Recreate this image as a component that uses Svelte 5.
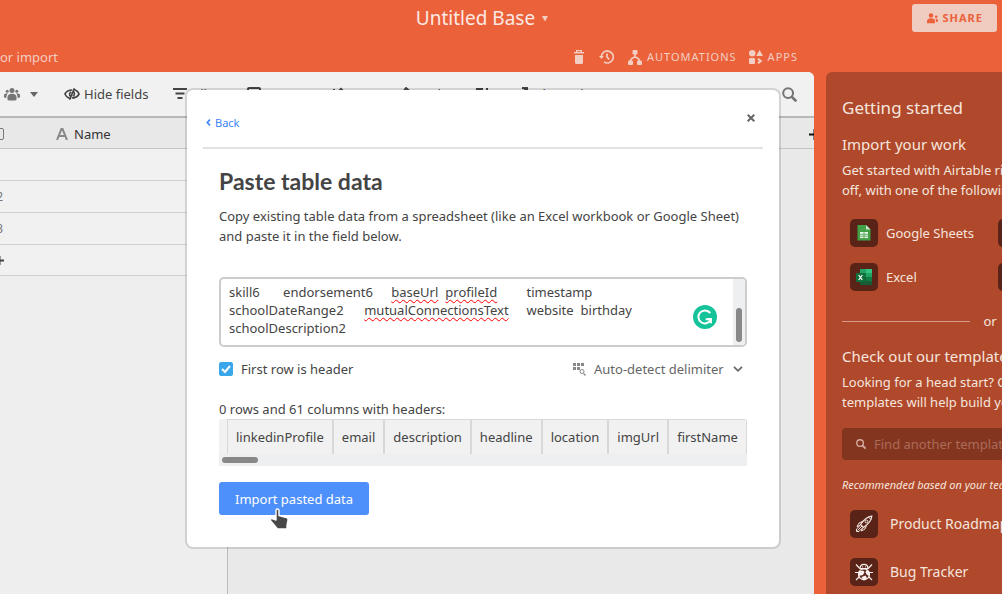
<script>
  const rows = ['1', '2', '3'];
  const tools = [
    { name: 'Filter', icon: 'filter', width: 74 },
    { name: 'Group', icon: 'group', width: 84 },
    { name: 'Sort', icon: 'sort', width: 70 },
    { name: 'Color', icon: 'color', width: 74 },
    { name: '', icon: 'height', width: 40 },
    { name: 'Share view', icon: 'share', width: 100 }
  ];
  const columns = ['linkedinProfile', 'email', 'description', 'headline', 'location', 'imgUrl', 'firstName'];
  const pastedLines = [
    [['skill6\tendorsement6\t'], ['baseUrl', true], ['\t'], ['profileId', true], ['\t\ttimestamp\n']],
    [['schoolDateRange2\t'], ['mutualConnectionsText', true], ['\twebsite\tbirthday\n']],
    [['schoolDescription2']]
  ];
  const segments = pastedLines.flat();
  let pasted = $state(segments.map(([text]) => text).join(''));
  let firstRowIsHeader = $state(true);
</script>

{#snippet magnifier(size)}
  <svg width={size} height={size} viewBox="0 0 14 14" fill="none" stroke="currentColor" aria-hidden="true">
    <circle cx="5.7" cy="5.7" r="4.6" stroke-width="1.9" />
    <path d="M9.2 9.2 12.6 12.6" stroke-width="2.5" stroke-linecap="round" />
  </svg>
{/snippet}

<div class="page">
  <header class="top">
    <div class="title-row">
      <button class="base-name">Untitled Base
        <svg width="6" height="5" viewBox="0 0 6 5" aria-hidden="true"><path d="M0 0h6L3.600 4.400a.7.7 0 0 1-1.200 0z" fill="#f3cec2" /></svg>
      </button>
      <button class="share">
        <svg width="11" height="11" viewBox="0 0 11 11" fill="currentColor" aria-hidden="true">
          <circle cx="4" cy="2.500" r="2.300" />
          <path d="M0 10.300V8.200C0 6.400 1.500 5.300 4 5.300s4 1.100 4 2.900v2.100z" />
          <circle cx="9.200" cy="3.800" r="1.300" /><path d="M8.200 5.800c2-.3 2.800.5 2.800 1.700v1.200H9c0-1.200-.2-2.100-.8-2.900z" />
        </svg>
        SHARE
      </button>
    </div>
    <nav class="sub-row">
      <a href="#import">or import</a>
      <div class="actions">
        <button aria-label="Trash" class="trash">
          <svg width="10" height="14" viewBox="0 0 10 14" aria-hidden="true">
            <path d="M1 5h8v7.500a1.500 1.500 0 0 1-1.500 1.500h-5A1.500 1.500 0 0 1 1 12.500zM0 2h10v1.600H0z" fill="currentColor" /><path d="M2.600 2V.6h4.800V2" fill="none" stroke="currentColor" stroke-width="1.200" />
          </svg>
        </button>
        <button aria-label="History" class="history">
          <svg width="15" height="14" viewBox="0 0 15 14" fill="none" stroke="currentColor" stroke-width="1.700" aria-hidden="true">
            <path d="M2.300 7a6 6 0 1 1 2.600 4.900M8 3.500V7l2.200 2.400" /><path d="M0 6h4.800L2.400 9z" fill="currentColor" stroke="none" />
          </svg>
        </button>
        <button class="automations">
          <svg width="14" height="15" viewBox="0 0 14 15" fill="currentColor" aria-hidden="true">
            <rect x="4.500" width="5" height="4.500" rx="1" /><rect y="10.500" width="5" height="4.500" rx="1" /><rect x="9" y="10.500" width="5" height="4.500" rx="1" />
            <path d="M7 4v3.500M2.500 11c0-2.200 1-3.100 4.500-4.100 3.500 1 4.500 1.900 4.500 4.100" fill="none" stroke="currentColor" stroke-width="1.600" />
          </svg>
          AUTOMATIONS
        </button>
        <button class="apps">
          <svg width="14" height="14" viewBox="0 0 14 14" fill="currentColor" aria-hidden="true">
            <circle cx="3.200" cy="3.200" r="3.200" /><path d="M10.600 0 14 6H7.200z" /><rect y="8" width="6" height="6" rx="1" />
            <path d="M9 8.700 11.800 11 9 13.300" fill="none" stroke="currentColor" stroke-width="2" />
          </svg>
          APPS
        </button>
      </div>
    </nav>
  </header>

  <div class="main">
    <main class="workspace">
      <div class="toolbar">
        <button class="views" aria-label="Collaborative view">
          <svg width="16" height="13" viewBox="0 0 16 13" fill="#757575" aria-hidden="true">
            <circle cx="8" cy="2.600" r="2.500" /><circle cx="3.200" cy="3.200" r="1.500" /><circle cx="12.800" cy="3.200" r="1.500" />
            <path d="M3.500 12V9.200C3.500 7 5 5.700 8 5.700s4.500 1.300 4.500 3.500V12c-1.300.8-7.700.8-9 0zM0 9.600V7.200c0-1.500 1.500-2.100 4-1.700C2.700 6.500 2.300 8 2.400 10c-1 0-1.800 0-2.400-.4zM16 9.600V7.200c0-1.500-1.500-2.100-4-1.700 1.300 1 1.700 2.500 1.600 4.500 1 0 1.800 0 2.400-.4z" />
          </svg>
          <svg width="8" height="5" viewBox="0 0 8 5" aria-hidden="true"><path d="M0 0h8L4 5z" fill="#666" /></svg>
        </button>
        <button class="hide">
          <svg width="16" height="12" viewBox="0 0 16 12" fill="none" stroke="currentColor" stroke-width="1.600" aria-hidden="true">
            <path d="M5.500 10.500C3.400 9.600 1.700 8 .9 6c1.300-2.400 3.600-4 7.300-4M6.300 8.300C4.900 6.500 5.800 4.300 7.300 3.900M10.500 1.500C12.600 2.400 14.300 4 15.100 6c-1.300 2.400-3.600 4-7.300 4M9.700 3.700c1.400 1.800.5 4-1 4.400M10.400.3 5.600 11.700" />
          </svg>
          Hide fields
        </button>
        <div class="tools">
          {#each tools as tool}
            <button style:width="{tool.width}px" aria-label={tool.name || 'Row height'}>
              <svg width="14" height="14" viewBox="0 0 14 14" fill="none" stroke="currentColor" stroke-width="2" aria-hidden="true">
                {#if tool.icon === 'filter'}<path d="M0 2h14M2.500 6.500h9M4.500 11h5" />
                {:else if tool.icon === 'group'}<rect x="1" y="1" width="12" height="11" rx="1" />
                {:else if tool.icon === 'sort'}<path d="M3 2v10M10 2v10M1 10l2 2 2-2M8 4l2-2 2 2" />
                {:else if tool.icon === 'color'}<path d="m5 1 7 6-5 5-6-5z" />
                {:else if tool.icon === 'height'}<path d="M1 2h7M1 7h7M1 12h7M12 1v12" />
                {:else}<path d="M7 1h5v5M12 1 6 7M1 4v8h9V9" />{/if}
              </svg>
              {tool.name}
            </button>
          {/each}
        </div>
        <button class="find" aria-label="Find">{@render magnifier(15)}</button>
      </div>

      <div class="sheet">
        <div class="sheet-head">
          <input type="checkbox" aria-label="Select all rows" />
          <svg class="field-type" width="12" height="12" viewBox="0 0 12 12" fill="none" stroke="#888" stroke-width="2" aria-hidden="true"><path d="M1 12 5.500.800h1L11 12M2.700 8h6.600" /></svg>
          <span>Name</span>
          <button class="add-field" aria-label="Add field">
            <svg width="11" height="11" viewBox="0 0 11 11" aria-hidden="true"><path d="M5.500 0v11M0 5.500h11" stroke="#111" stroke-width="2" /></svg>
          </button>
        </div>
        <div class="records">
          {#each rows as row, i}
            <div class="record" class:active={i === 0}><span>{row}</span></div>
          {/each}
          <button class="record add" aria-label="Add record">
            <svg width="9" height="9" viewBox="0 0 9 9" aria-hidden="true"><path d="M4.500 0v9M0 4.500h9" stroke="#444" stroke-width="2" /></svg>
          </button>
        </div>
      </div>
    </main>

    <aside class="panel">
      <h2>Getting started</h2>
      <h3>Import your work</h3>
      <p>Get started with Airtable right<br />off, with one of the following:</p>
      <div class="sources">
        <a href="#sheets">
          <span class="tile"><svg width="16" height="18" viewBox="0 0 16 18" aria-hidden="true">
            <path d="M2 1h8l4.500 4.500v11H1.500V1z" fill="#43a047" /><path d="m10 1 4.500 4.500H10z" fill="#c8e6c9" />
            <path d="M4 8h8v6H4z" fill="#e8f5e9" /><path d="M4 10.300h8M8 8v6M4 12.200h8" stroke="#43a047" stroke-width=".8" />
          </svg></span>Google Sheets
        </a>
        <span class="tile"></span>
        <a href="#excel">
          <span class="tile"><svg width="16" height="16" viewBox="0 0 16 16" aria-hidden="true">
            <path d="M4 0h6v4H4z" fill="#21a366" /><path d="M10 0h6v4h-6z" fill="#33c481" /><path d="M4 4h6v4H4z" fill="#107c41" /><path d="M10 4h6v4h-6z" fill="#21a366" />
            <path d="M4 8h6v4H4z" fill="#185c37" /><path d="M10 8h6v4h-6z" fill="#107c41" /><path d="M4 12h12v4H4z" fill="#185c37" />
            <rect y="4" width="9" height="9" rx="1" fill="#10703b" /><path d="m2.700 6 3.600 5M6.300 6l-3.600 5" stroke="#fff" stroke-width="1.200" />
          </svg></span>Excel
        </a>
        <span class="tile"></span>
      </div>
      <div class="divider"><span>or</span></div>
      <h3>Check out our templates</h3>
      <p>Looking for a head start? Our<br />templates will help build your</p>
      <label class="search">
        {@render magnifier(10)}
        <input type="search" placeholder="Find another template" aria-label="Find another template" />
      </label>
      <em>Recommended based on your team</em>
      <a class="template" href="#roadmap">
        <span class="tile"><svg width="18" height="18" viewBox="0 0 18 18" fill="none" stroke="#f4e6e1" aria-hidden="true">
          <path d="M16.800 1.200c-4.300.4-7.300 2.600-11.300 8.300l3 3c5.700-4 7.900-7 8.300-11.300z" stroke-width="1.200" /><path d="M13.300 1.900l2.800 2.800" /><circle cx="11.500" cy="6.500" r="1.400" />
          <path d="M7.500 6.500 4 8 2 11.700l3.500-1.500M11.500 10.500 10 14l-3.700 2 1.500-3.500M4.700 11 1.500 14v2.500H4l3-3.200M2.500 15.500 7 11" />
        </svg></span>Product Roadmap
      </a>
      <a class="template" href="#bugs">
        <span class="tile"><svg width="18" height="18" viewBox="0 0 18 18" fill="none" stroke="#f8eeeb" stroke-width="1.200" aria-hidden="true">
          <path d="M1 1.500 4.800 5.500M17 1.500 13.200 5.500M0 9.500h4M14 9.500h4M1 17l3.500-3.500M17 17l-3.500-3.500" /><path d="M5 5.500C5 2.800 6.500 1.300 9 1.300s4 1.500 4 4.200z" />
          <circle cx="9" cy="11.300" r="5.500" />
          <path d="M3.500 8.500 8 7.500l1.500 1.500L8 12l-4.500 1zM11 7.300l3 .7.700 5-2.700-1-1.500-2.500zM6.500 14l4-1.500 1.500 2.500-2 2H8z" fill="#f8eeeb" stroke="none" /><path d="M7.500 3.800h.1M10.500 3.800h.1" stroke-linecap="round" />
        </svg></span>Bug Tracker
      </a>
    </aside>
  </div>

  <div class="overlay">
    <section class="dialog" role="dialog" aria-labelledby="dialog-title">
      <div class="dialog-head">
        <button class="back"><svg width="5" height="7" viewBox="0 0 5 7" aria-hidden="true"><path d="M4 .6 1.300 3.500 4 6.400" fill="none" stroke="currentColor" stroke-width="1.600" /></svg>Back</button>
        <button class="close" aria-label="Close"><svg width="8" height="8" viewBox="0 0 8 8" aria-hidden="true"><path d="M.7.700 7.300 7.300M7.300.700.700 7.300" stroke="currentColor" stroke-width="2" /></svg></button>
      </div>
      <div class="dialog-body">
        <h1 id="dialog-title">Paste table data</h1>
        <p id="paste-help">Copy existing table data from a spreadsheet (like an Excel workbook or Google Sheet) and paste it in the field below.</p>
        <div class="paste">
          <div class="marks" aria-hidden="true">{#each segments as [text, misspelt]}<span class:misspelt>{text}</span>{/each}</div>
          <textarea bind:value={pasted} aria-labelledby="dialog-title" aria-describedby="paste-help" spellcheck="false"></textarea>
          <div class="v-track"><span></span></div>
          <svg class="checker" width="24" height="24" viewBox="0 0 24 24" aria-hidden="true">
            <circle cx="12" cy="12" r="12" fill="#15c39a" />
            <path d="M16.700 7.500A6.500 6.500 0 1 0 17.600 15" fill="none" stroke="#fff" stroke-width="2" stroke-linecap="round" />
            <path d="M12.700 14.300h5.200v4" fill="none" stroke="#fff" stroke-width="2" /><path d="m14 13.300h4.900v5z" fill="#fff" />
          </svg>
        </div>
        <div class="options">
          <label class="check">
            <input type="checkbox" bind:checked={firstRowIsHeader} />
            First row is header
          </label>
          <label class="delimiter">
            <svg width="13" height="13" viewBox="0 0 13 13" fill="#888" aria-hidden="true">
              <path d="M0 0h3v3H0zM4 0h3v3H4zM8 0h3v3H8zM0 4h3v3H0zM4 4h3v3H4z" /><path d="m10.500 10.500 2 2" stroke="#888" stroke-width="1.200" /><circle cx="9" cy="8.500" r="2" fill="none" stroke="#888" />
            </svg>
            <span class="select">
              <select aria-label="Delimiter"><option>Auto-detect delimiter</option></select>
              <svg width="10" height="6" viewBox="0 0 10 6" aria-hidden="true"><path d="m1 .8 4 4 4-4" fill="none" stroke="#666" stroke-width="1.700" /></svg>
            </span>
          </label>
        </div>
        <div class="summary">0 rows and 61 columns with headers:</div>
        <div class="preview">
          <table>
            <thead><tr>{#each columns as column}<th scope="col">{column}</th>{/each}</tr></thead>
          </table>
          <div class="h-track"><span></span></div>
        </div>
        <div class="submit">
          <button>Import pasted data</button>
          <svg class="pointer" width="23" height="24" viewBox="0 0 23 24" aria-hidden="true">
            <path d="M8 3.500c0-2 3-2 3 0v5l7.500 2.200c1.300.4 1.800 1 1.600 2.300L19 18.500V22H9.500L3 14.300c-1.300-1.700-.5-3 1.200-2.600L8 13z" fill="#484848" stroke="#fff" stroke-width="1.400" stroke-linejoin="round" />
          </svg>
        </div>
      </div>
    </section>
  </div>
</div>

<style>
  :global(body) { margin: 0; }
  * { box-sizing: border-box; }
  .page {
    position: relative;
    display: flex;
    flex-direction: column;
    height: 100vh;
    overflow: hidden;
    background: #eb613a;
    color: #444;
    font: 13px/20px "Noto Sans", sans-serif;
  }
  button, input, textarea, select { font: inherit; color: inherit; }
  button { display: flex; align-items: center; padding: 0; border: 0; background: none; white-space: nowrap; }
  a { color: inherit; text-decoration: none; }
  svg { display: block; flex: none; }
  h1, h2, h3, p { margin: 0; font-weight: 400; }

  .top { color: #f3cec2; }
  .title-row { display: grid; grid-template-columns: 1fr auto 1fr; align-items: center; height: 36px; padding-right: 5px; }
  .base-name { grid-column: 2; gap: 7px; margin-right: 33px; color: #fbe9e3; font-size: 19px; }
  .share {
    justify-self: end;
    gap: 5px;
    height: 28px;
    padding: 0 14px 0 15px;
    border-radius: 3px;
    background: #f0cbc0;
    color: #eb613a;
    font-size: 11px;
    font-weight: 700;
    letter-spacing: 1px;
  }
  .sub-row { display: flex; align-items: center; justify-content: space-between; height: 36px; padding: 6px 204px 0 0; }
  .actions { display: flex; align-items: center; font-size: 11px; }
  .actions button { gap: 5px; letter-spacing: 1px; }
  .actions .history { margin-left: 15px; }
  .actions .automations { margin-left: 14px; }
  .actions .apps { margin-left: 12px; gap: 5px; }

  .main { display: flex; flex: 1; gap: 12px; min-height: 0; }
  .workspace { display: flex; flex: 1; flex-direction: column; min-width: 0; overflow: hidden; border-radius: 0 6px 0 0; background: #e9e9e9; }
  .toolbar { display: flex; align-items: center; height: 46px; padding: 0 17px 0 4px; border-bottom: 2px solid #b8b8b8; background: #f1f1f1; }
  .views { gap: 10px; }
  .hide { gap: 4px; margin-left: 26px; }
  .tools { display: flex; flex: 1; min-width: 0; margin-left: 25px; overflow: hidden; }
  .tools button { gap: 6px; }
  .find { color: #757575; }
  .sheet { display: flex; flex: 1; flex-direction: column; min-height: 0; }
  .sheet-head { display: flex; align-items: center; height: 31px; padding-top: 2px; border-bottom: 1px solid #c4c4c4; background: #e8e8e8; color: #333; }
  .sheet-head input { width: 12px; height: 12px; margin: 0 52px 0 -8px; border: 1px solid #777; border-radius: 2px; appearance: none; }
  .sheet-head span { margin-left: 6px; }
  .add-field { margin: 0 -6px 0 auto; }
  .records { flex: 1; width: 228px; border-right: 1px solid #bbb; background: #eee; }
  .record { display: flex; align-items: center; width: 100%; height: 32px; border-bottom: 1px solid #d0d0d0; background: #f1f1f1; color: #777; font-size: 12px; }
  .record span { display: flex; justify-content: flex-end; width: 3px; }
  .active span { width: 2px; color: #a8e8f0; }
  .add { height: 31px; }
  .add svg { margin-left: -5px; }

  .panel { flex: 0 0 176px; padding: 24px 0 0 16px; overflow: hidden; border-radius: 6px 0 0; background: #b0492b; color: #f5e5df; white-space: nowrap; }
  .panel h2 { font-size: 17px; line-height: 24px; }
  .panel h3 { margin-top: 12px; font-size: 15px; line-height: 24px; }
  .panel p { margin-top: 4px; }
  .panel a { display: flex; align-items: center; }
  .tile { display: flex; flex: none; align-items: center; justify-content: center; width: 28px; height: 28px; border-radius: 5px; background: #592417; }
  .sources { display: grid; grid-template-columns: 148px 148px; row-gap: 16px; margin: 19px 0 0 8px; }
  .sources a { gap: 8px; }
  .divider { display: flex; align-items: center; gap: 13px; width: 296px; margin-top: 20px; }
  .divider::before, .divider::after { content: ""; flex: 1; height: 1px; background: #d3998a; }
  .panel .divider + h3 { margin-top: 13px; }
  .search { display: flex; align-items: center; gap: 8px; width: 296px; height: 32px; margin-top: 16px; padding: 0 14px; border-radius: 4px; background: #84351f; color: #d5aca0; }
  .search input { flex: 1; min-width: 0; padding: 0; border: 0; outline: 0; background: none; }
  .search input::placeholder { color: #aa6b59; opacity: 1; }
  .panel em { display: block; margin: 16px 0; font-size: 11px; line-height: 18px; }
  .template { gap: 12px; margin: 0 0 20px 8px; font-size: 14px; }

  .overlay { position: absolute; inset: 0; display: flex; align-items: flex-start; padding: 88px 221px 0 185px; }
  .dialog { flex: 1; min-width: 0; border: 2px solid rgba(0, 0, 0, .12); border-radius: 8px; background: #fff; background-clip: padding-box; }
  .dialog-head { display: flex; align-items: center; justify-content: space-between; height: 59px; margin: 0 16px; padding: 8px 8px 0 3px; border-bottom: 2px solid #e2e2e2; }
  .back { gap: 4px; color: #3c83f6; font-size: 11px; }
  .close { margin-bottom: 10px; color: #666; }
  .dialog-body { padding: 17px 32px 32px; }
  h1 { font: 700 23px/30px Lato, sans-serif; }
  .dialog-body p { margin-top: 10px; }
  .paste { position: relative; display: grid; grid-template-columns: 1fr 12px; height: 70px; margin-top: 31px; overflow: hidden; border: 2px solid #ccc; border-radius: 5px; }
  .marks, textarea { grid-area: 1 / 1; padding: 4px 8px; font: 13px/18px "Noto Sans", sans-serif; tab-size: 8; white-space: pre-wrap; }
  .marks { color: transparent; }
  .misspelt { text-decoration: underline wavy #f00 1px; text-underline-offset: 2px; text-decoration-skip-ink: none; }
  textarea { margin: 0; border: 0; outline: 0; background: none; resize: none; overflow: hidden; }
  .v-track { grid-area: 1 / 2; display: flex; align-items: flex-end; justify-content: center; padding-bottom: 3px; background: #eeeff1; }
  .v-track span { width: 6px; height: 34px; border-radius: 3px; background: #888; }
  .checker { position: absolute; right: 28px; top: 26px; }
  .options { display: flex; align-items: center; justify-content: space-between; height: 20px; margin-top: 12px; padding-right: 4px; }
  .check { display: flex; align-items: center; gap: 8px; }
  .check input { width: 14px; height: 14px; margin: 0; border: 1px solid #39a7ea; border-radius: 2px; appearance: none; }
  .check input:checked { background: #39a7ea url("data:image/svg+xml,%3Csvg xmlns='http://www.w3.org/2000/svg' viewBox='0 0 12 12'%3E%3Cpath d='m2 6 3 3 5-6' fill='none' stroke='white' stroke-width='2'/%3E%3C/svg%3E") center / 12px; }
  .delimiter { display: flex; align-items: center; gap: 8px; color: #666; }
  .select { display: grid; align-items: center; }
  .select select { grid-area: 1 / 1; margin: 0; padding: 0 19px 0 0; border: 0; background: none; appearance: none; }
  .select svg { grid-area: 1 / 1; justify-self: end; pointer-events: none; }
  .summary { margin-top: 20px; }
  .preview { padding-left: 8px; overflow: hidden; border-radius: 3px 3px 0 0; background: #f1f1f1; }
  table { width: 100%; border-collapse: separate; border-spacing: 0; }
  th { height: 35px; padding: 0 8px; border: 1px solid #d8d8d8; border-bottom: 0; font-weight: 400; text-align: left; }
  .h-track { display: flex; align-items: center; height: 12px; margin-left: -8px; padding-left: 3px; background: #eeeff1; }
  .h-track span { width: 36px; height: 6px; border-radius: 3px; background: #888; }
  .submit { position: relative; margin-top: 16px; }
  .submit button { height: 33px; padding: 0 16px; border-radius: 3px; background: #4d90fb; color: #fff; }
  .pointer { position: absolute; left: 49px; top: 25px; }
</style>
